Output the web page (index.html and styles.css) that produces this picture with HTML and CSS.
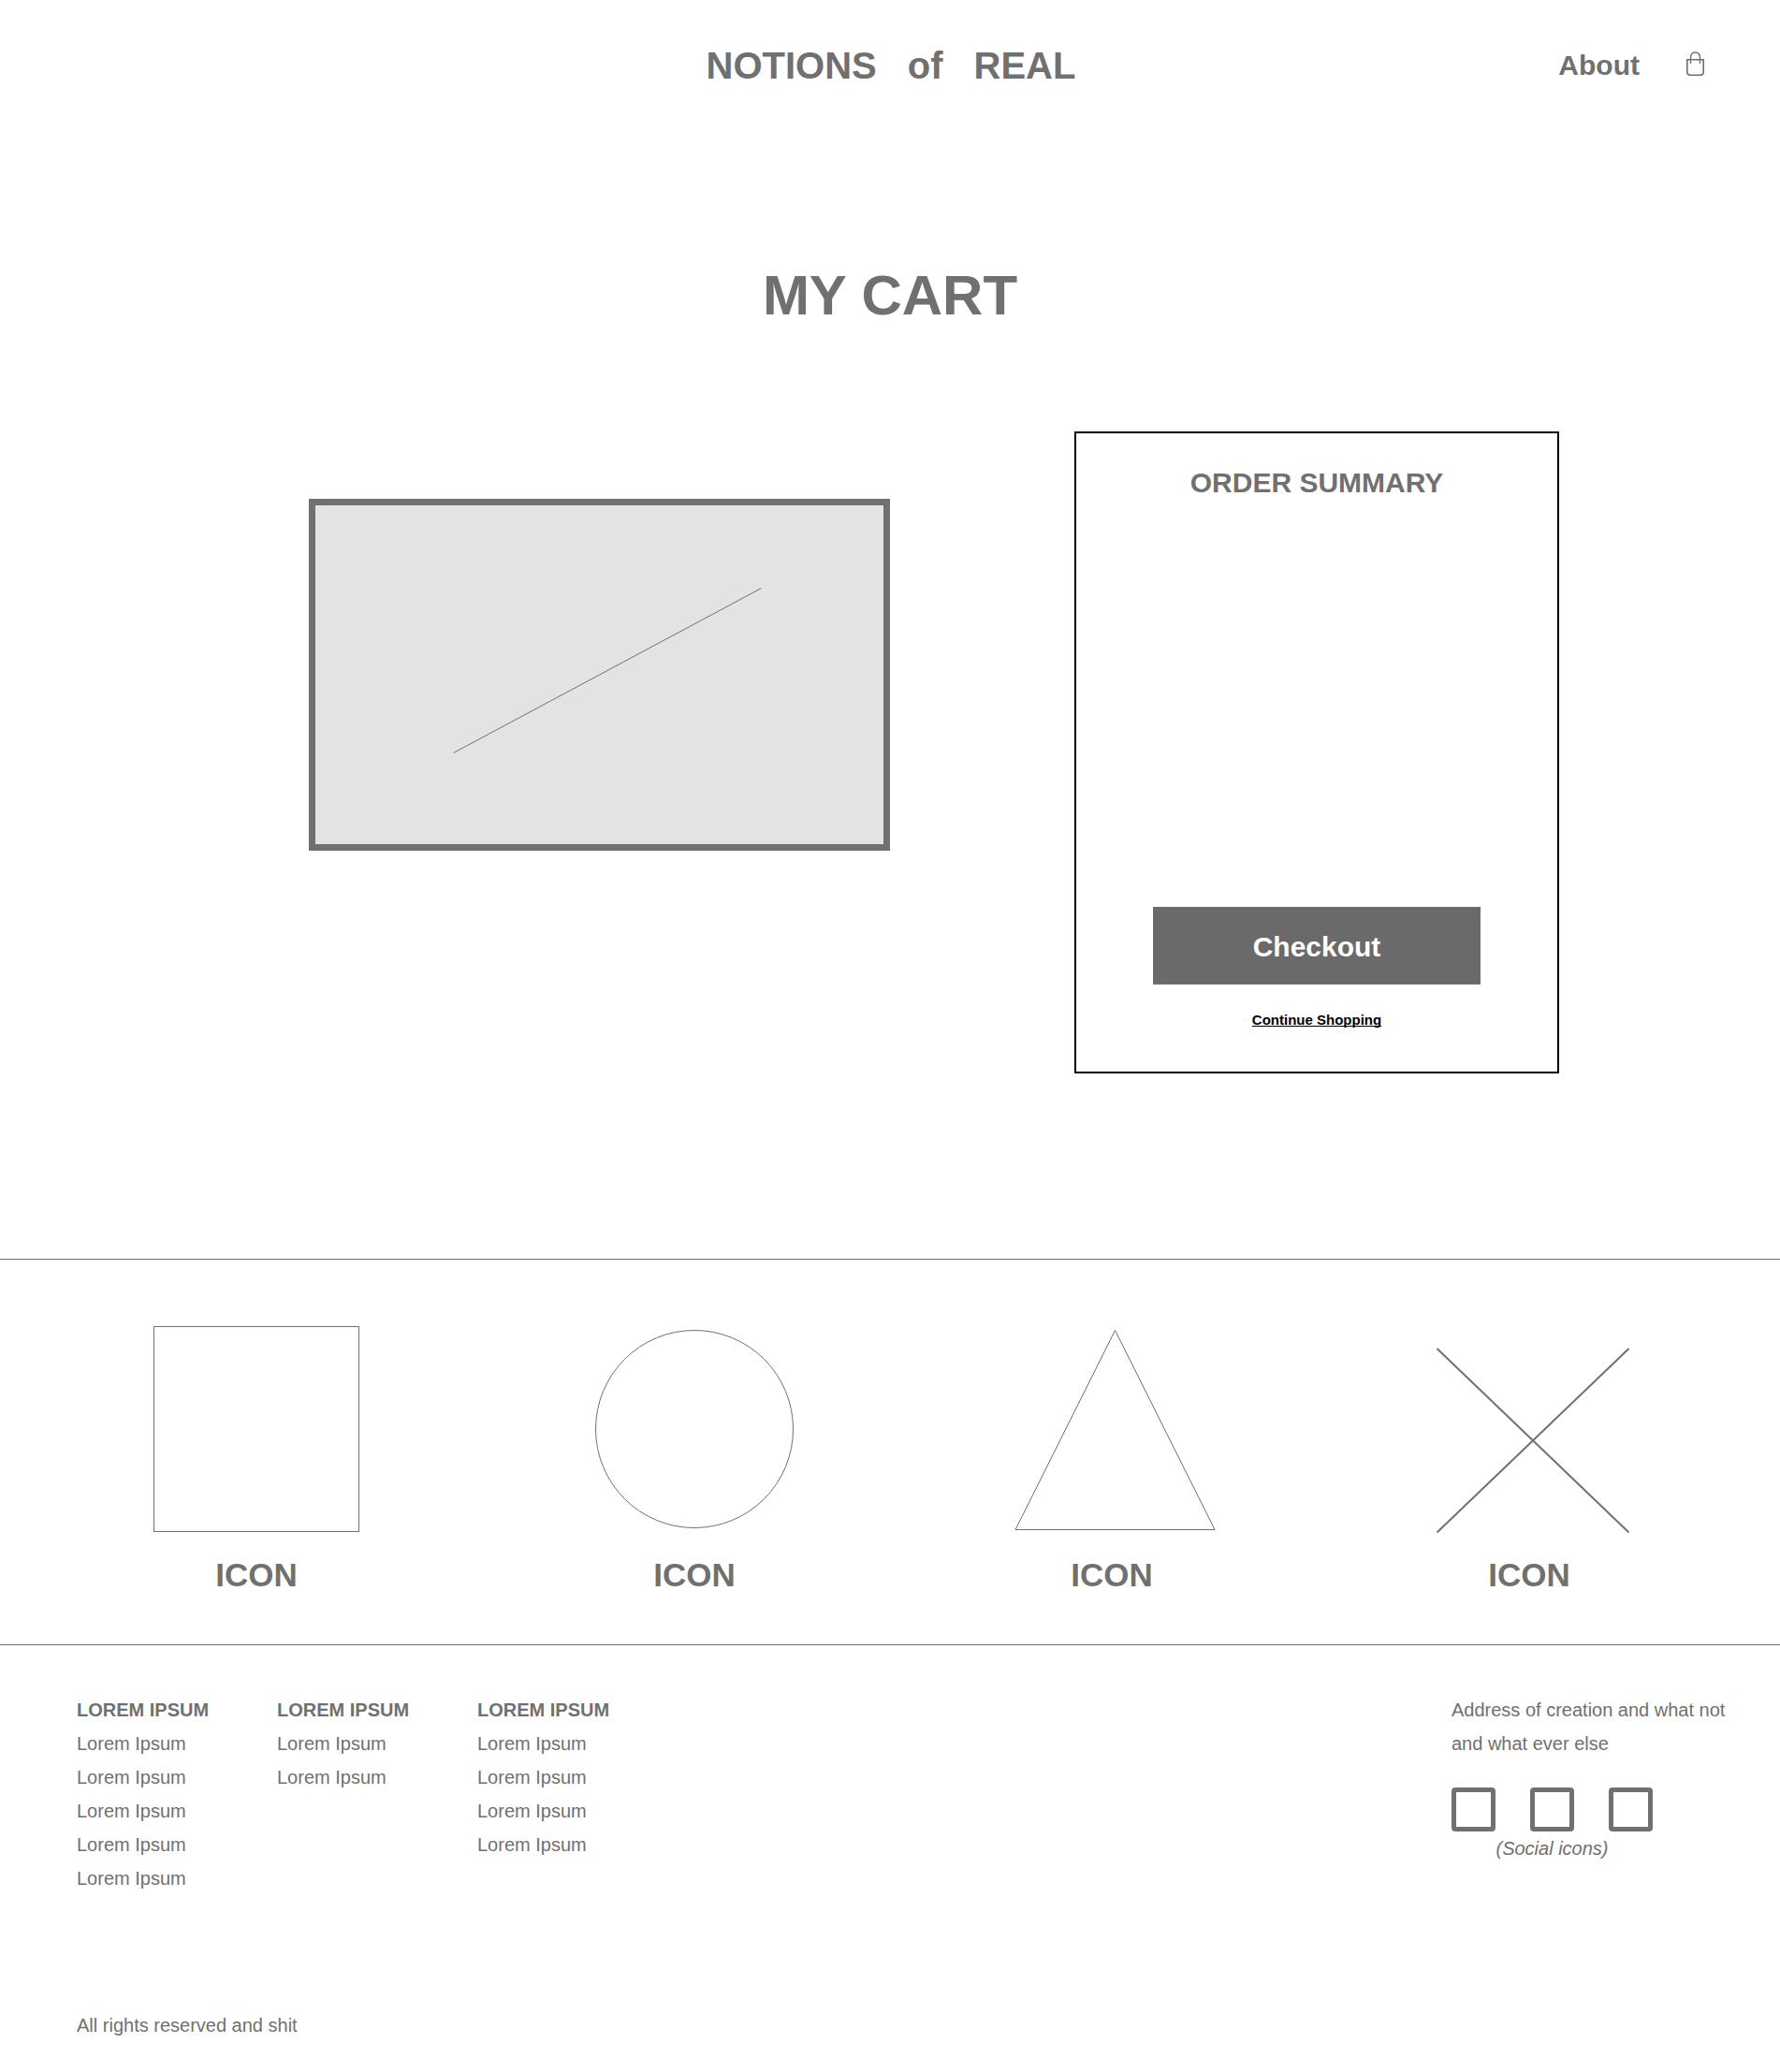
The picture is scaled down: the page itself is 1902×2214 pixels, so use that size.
FILE: index.html
```html
<!DOCTYPE html>
<html lang="en">
<head>
  <meta charset="utf-8">
  <meta name="viewport" content="width=device-width, initial-scale=1">
  <title>My Cart – Notions of Real</title>
  <link rel="stylesheet" href="styles.css">
</head>
<body>
  <header class="site-header">
    <a class="logo" href="#"><span>NOTIONS</span><span>of</span><span>REAL</span></a>
    <nav class="site-nav" aria-label="Main">
      <a class="nav-link" href="#">About</a>
      <a class="bag-link" href="#" aria-label="Cart">
        <svg class="bag-icon" width="20" height="30" viewBox="0 0 20 30" aria-hidden="true">
          <path d="M0.800 8.800H18.200V22Q18.200 25.200 15 25.200H4Q0.800 25.200 0.800 22Z" stroke-width="1.6"/>
          <path d="M4.500 13V7Q4.500 1 9.500 1T14.500 7V13" stroke-width="1.4"/>
        </svg>
      </a>
    </nav>
  </header>

  <main class="cart">
    <h1 class="cart-title">MY CART</h1>
    <div class="cart-body">
      <svg class="cart-image" viewBox="0 0 621 376" role="img" aria-label="Product image">
        <rect class="cart-image-frame" x="3.5" y="3.5" width="614" height="369"/>
        <line class="cart-image-line" x1="154.500" y1="271.500" x2="483.500" y2="95.500"/>
      </svg>
      <section class="summary">
        <h2 class="summary-title">ORDER SUMMARY</h2>
        <button class="checkout" type="button">Checkout</button>
        <a class="continue" href="#">Continue Shopping</a>
      </section>
    </div>
  </main>

  <section class="features" aria-label="Features">
    <div class="feature">
      <svg class="shape" width="222" height="221" viewBox="0 0 222 221" aria-hidden="true"><rect x="1.5" y="0.5" width="219" height="219"/></svg>
      <h3 class="feature-title">ICON</h3>
    </div>
    <div class="feature">
      <svg class="shape" width="222" height="221" viewBox="0 0 222 221" aria-hidden="true"><circle cx="111" cy="110" r="105.5"/></svg>
      <h3 class="feature-title">ICON</h3>
    </div>
    <div class="feature">
      <svg class="shape" width="222" height="221" viewBox="0 0 222 221" aria-hidden="true"><path d="M114.500 4.500L221 217.500H8Z"/></svg>
      <h3 class="feature-title">ICON</h3>
    </div>
    <div class="feature">
      <svg class="shape shape-bold" width="222" height="221" viewBox="0 0 222 221" aria-hidden="true"><path d="M12.500 24L217.500 220.500M217.500 24L12.500 220.500"/></svg>
      <h3 class="feature-title">ICON</h3>
    </div>
  </section>

  <footer class="site-footer">
    <div class="footer-top">
      <div class="footer-columns">
        <section>
          <h4 class="footer-heading">LOREM IPSUM</h4>
          <ul class="footer-list">
            <li><a href="#">Lorem Ipsum</a></li>
            <li><a href="#">Lorem Ipsum</a></li>
            <li><a href="#">Lorem Ipsum</a></li>
            <li><a href="#">Lorem Ipsum</a></li>
            <li><a href="#">Lorem Ipsum</a></li>
          </ul>
        </section>
        <section>
          <h4 class="footer-heading">LOREM IPSUM</h4>
          <ul class="footer-list">
            <li><a href="#">Lorem Ipsum</a></li>
            <li><a href="#">Lorem Ipsum</a></li>
          </ul>
        </section>
        <section>
          <h4 class="footer-heading">LOREM IPSUM</h4>
          <ul class="footer-list">
            <li><a href="#">Lorem Ipsum</a></li>
            <li><a href="#">Lorem Ipsum</a></li>
            <li><a href="#">Lorem Ipsum</a></li>
            <li><a href="#">Lorem Ipsum</a></li>
          </ul>
        </section>
      </div>
      <div class="contact">
        <address class="address">Address of creation and what not<br>and what ever else</address>
        <div class="social">
          <div class="social-icons">
            <a class="social-icon" href="#" aria-label="Social link 1"></a>
            <a class="social-icon" href="#" aria-label="Social link 2"></a>
            <a class="social-icon" href="#" aria-label="Social link 3"></a>
          </div>
          <em class="social-note">(Social icons)</em>
        </div>
      </div>
    </div>
    <p class="copyright">All rights reserved and shit</p>
  </footer>
</body>
</html>
```
FILE: styles.css
```css
* {
  box-sizing: border-box;
}

:root {
  --ink: #707070;
}

body {
  margin: 0;
  background: #fff;
  color: var(--ink);
  font: 20px/36px "Liberation Sans", Arial, sans-serif;
}

h1, h2, h3, h4, p, ul {
  margin: 0;
  padding: 0;
}

a {
  color: inherit;
  text-decoration: none;
}

svg {
  display: block;
}

/* Header */
.site-header {
  display: grid;
  grid-template-columns: 1fr auto 1fr;
  align-items: center;
  padding: 46px 80px;
}

.logo {
  grid-column: 2;
  display: flex;
  gap: 33px;
  padding-left: 2px;
  font-size: 40px;
  font-weight: 700;
  line-height: 48px;
}

.site-nav {
  display: flex;
  align-items: center;
  justify-content: flex-end;
  gap: 50px;
}

.nav-link {
  font-size: 30px;
  font-weight: 700;
  line-height: 48px;
}

.bag-icon {
  fill: none;
  stroke: var(--ink);
}

/* Cart */
.cart {
  padding: 140px 236px 198px 330px;
}

.cart-title {
  margin: 0 -236px 109px -330px;
  font-size: 60px;
  line-height: 72px;
  text-align: center;
}

.cart-body {
  display: grid;
  grid-template-columns: 621fr 518fr;
  align-items: start;
  gap: 197px;
}

.cart-image {
  width: 100%;
  margin-top: 72px;
}

.cart-image-frame {
  fill: #e3e3e3;
  stroke: var(--ink);
  stroke-width: 7;
}

.cart-image-line {
  stroke: var(--ink);
  stroke-width: 1;
}

.summary {
  display: flex;
  flex-direction: column;
  min-height: 686px;
  padding: 35px 82px 45px;
  border: 2px solid #000;
  text-align: center;
}

.summary-title {
  font-size: 30px;
  line-height: 36px;
}

.checkout {
  margin-top: auto;
  padding: 24px 0 22px;
  border: 1px solid var(--ink);
  background: #6a6a6a;
  color: #fff;
  font: 700 30px/35px "Liberation Sans", Arial, sans-serif;
  cursor: pointer;
}

.continue {
  align-self: center;
  margin-top: 28px;
  color: #000;
  font-size: 15px;
  font-weight: 700;
  line-height: 20px;
  text-decoration: underline;
  text-decoration-skip-ink: none;
}

/* Features */
.features {
  display: grid;
  grid-template-columns: 490fr 446fr 446fr 446fr;
  padding: 71px 45px 53px 29px;
  border-top: 1px solid var(--ink);
  border-bottom: 1px solid var(--ink);
}

.feature {
  display: flex;
  flex-direction: column;
  align-items: center;
  gap: 24px;
}

.shape {
  fill: none;
  stroke: var(--ink);
  stroke-width: 1;
}

.shape-bold {
  stroke-width: 2;
}

.feature-title {
  font-size: 35px;
  line-height: 42px;
}

/* Footer */
.site-footer {
  padding: 51px 51px 32px 82px;
}

.footer-top {
  display: flex;
  justify-content: space-between;
}

.footer-columns {
  display: grid;
  grid-template-columns: repeat(3, 214px);
}

.footer-heading {
  font-size: 20px;
}

.footer-list {
  list-style: none;
}

.contact {
  width: 300px;
}

.address {
  font-style: normal;
  white-space: nowrap;
}

.social {
  width: max-content;
  margin-top: 29px;
  text-align: center;
}

.social-icons {
  display: flex;
  gap: 37px;
}

.social-icon {
  width: 47px;
  height: 47px;
  border: 5px solid var(--ink);
  border-radius: 4px;
}

.social-note {
  display: block;
}

.copyright {
  margin-top: 121px;
}
```
